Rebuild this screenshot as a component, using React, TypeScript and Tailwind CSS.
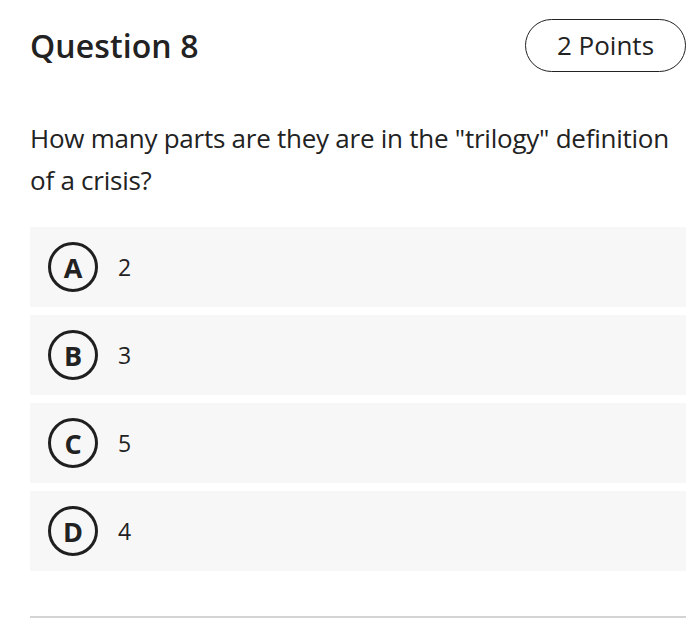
import React from "react";

const options = [
  { letter: "A", text: "2" },
  { letter: "B", text: "3" },
  { letter: "C", text: "5" },
  { letter: "D", text: "4" },
];

export default function App() {
  return (
    <div
      className="w-[700px] h-[623px] bg-white text-[#222222] overflow-hidden"
      style={{ fontFamily: '"Open Sans", "Noto Sans", sans-serif' }}
    >
      <div className="pl-[30px] pr-[14px] pt-[19px]">
        <div className="flex items-center justify-between">
          <h1 className="text-[32px] font-semibold leading-none tracking-[0.1px]">Question 8</h1>
          <div className="w-[161px] h-[53px] rounded-full border-[1.5px] border-[#222222] flex items-center justify-center text-[26px] font-normal">
            2 Points
          </div>
        </div>
        <p className="mt-[45px] text-[26px] leading-[42px] tracking-[-0.25px]">
          How many parts are they are in the "trilogy" definition of a crisis?
        </p>
        <div className="mt-[26px] flex flex-col gap-[8px]">
          {options.map((o) => (
            <div key={o.letter} className="h-[80px] bg-[#f7f7f7] flex items-center pl-[18px]">
              <div className="w-[50px] h-[50px] rounded-full border-[3px] border-[#1f1f1f] flex items-center justify-center text-[27px] font-bold leading-none">
                {o.letter}
              </div>
              <span className="ml-[20px] text-[23px]">{o.text}</span>
            </div>
          ))}
        </div>
        <div className="mt-[45px] h-[2px] bg-[#d4d4d4]" />
      </div>
    </div>
  );
}
